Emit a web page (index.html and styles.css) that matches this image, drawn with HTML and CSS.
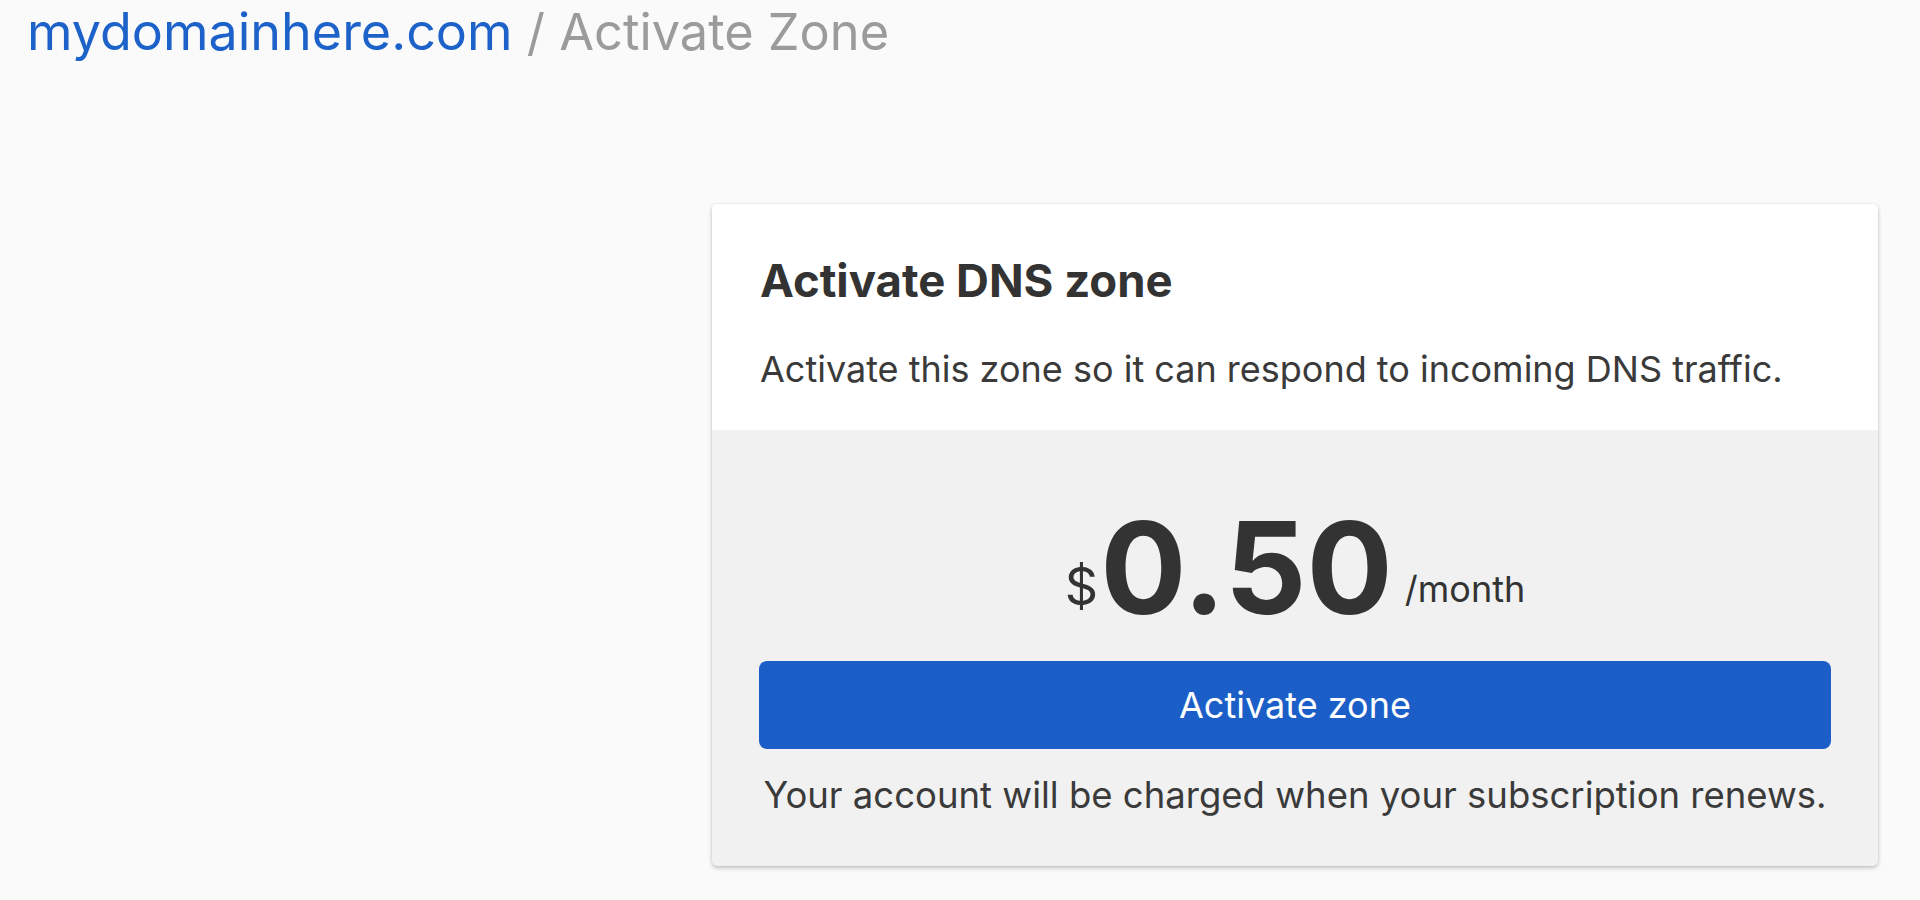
FILE: index.html
```html
<!DOCTYPE html>
<html>
<head>
<meta charset="utf-8">
<link rel="stylesheet" href="styles.css">
</head>
<body>
<div class="page">
  <div class="breadcrumb"><a class="crumb-link" href="#">mydomainhere.com</a><span class="crumb-sep"> / </span><span class="crumb-current">Activate Zone</span></div>
  <div class="card">
    <div class="card-top">
      <h1 class="card-title">Activate DNS zone</h1>
      <p class="card-desc">Activate this zone so it can respond to incoming DNS traffic.</p>
    </div>
    <div class="card-bottom">
      <div class="price"><span class="currency">$</span><span class="amount">0.50</span><span class="period">/month</span></div>
      <button class="btn-primary">Activate zone</button>
      <p class="note">Your account will be charged when your subscription renews.</p>
    </div>
  </div>
</div>
</body>
</html>
```

FILE: styles.css
```css
html, body {
  margin: 0;
  padding: 0;
  background: #fafafa;
  font-family: Inter, Roboto, "Liberation Sans", sans-serif;
  color: #333;
}
.page {
  width: 1920px;
  height: 900px;
  overflow: hidden;
}
.breadcrumb {
  padding: 2px 0 0 27px;
  font-size: 52px;
  line-height: 60px;
}
.crumb-link {
  color: #1d62c9;
  text-decoration: none;
}
.crumb-sep, .crumb-current {
  color: #9b9b9b;
  font-size: 50.5px;
}
.card {
  margin: 142px 0 0 712px;
  width: 1166px;
  border-radius: 5px;
  overflow: hidden;
  background: #f1f1f1;
  box-shadow: 0 2px 4px rgba(0,0,0,0.22), 0 0 2px rgba(0,0,0,0.08);
}
.card-top {
  background: #fff;
  padding: 48px 48px 37px;
}
.card-title {
  margin: 0;
  font-size: 45.5px;
  line-height: 58px;
  font-weight: 700;
  color: #333;
}
.card-desc {
  margin: 35px 0 0;
  font-size: 36px;
  line-height: 48px;
  color: #3a3a3a;
}
.card-bottom {
  padding: 68px 47px 47px;
  display: flex;
  flex-direction: column;
  align-items: stretch;
}
.price {
  text-align: center;
  line-height: 140px;
  height: 140px;
  color: #333;
}
.currency {
  font-size: 52px;
  margin-right: 2px;
  vertical-align: 9px;
}
.amount {
  font-size: 128px;
  font-weight: 700;
}
.period {
  font-size: 36px;
  margin-left: 12px;
  vertical-align: 12px;
}
.btn-primary {
  margin-top: 23px;
  height: 88px;
  border: none;
  border-radius: 8px;
  background: #1b5ec7;
  color: #fff;
  font-family: Inter, Roboto, "Liberation Sans", sans-serif;
  font-size: 36px;
}
.note {
  margin: 22px 0 0;
  text-align: center;
  font-size: 36.5px;
  line-height: 48px;
  color: #3a3a3a;
}
```
